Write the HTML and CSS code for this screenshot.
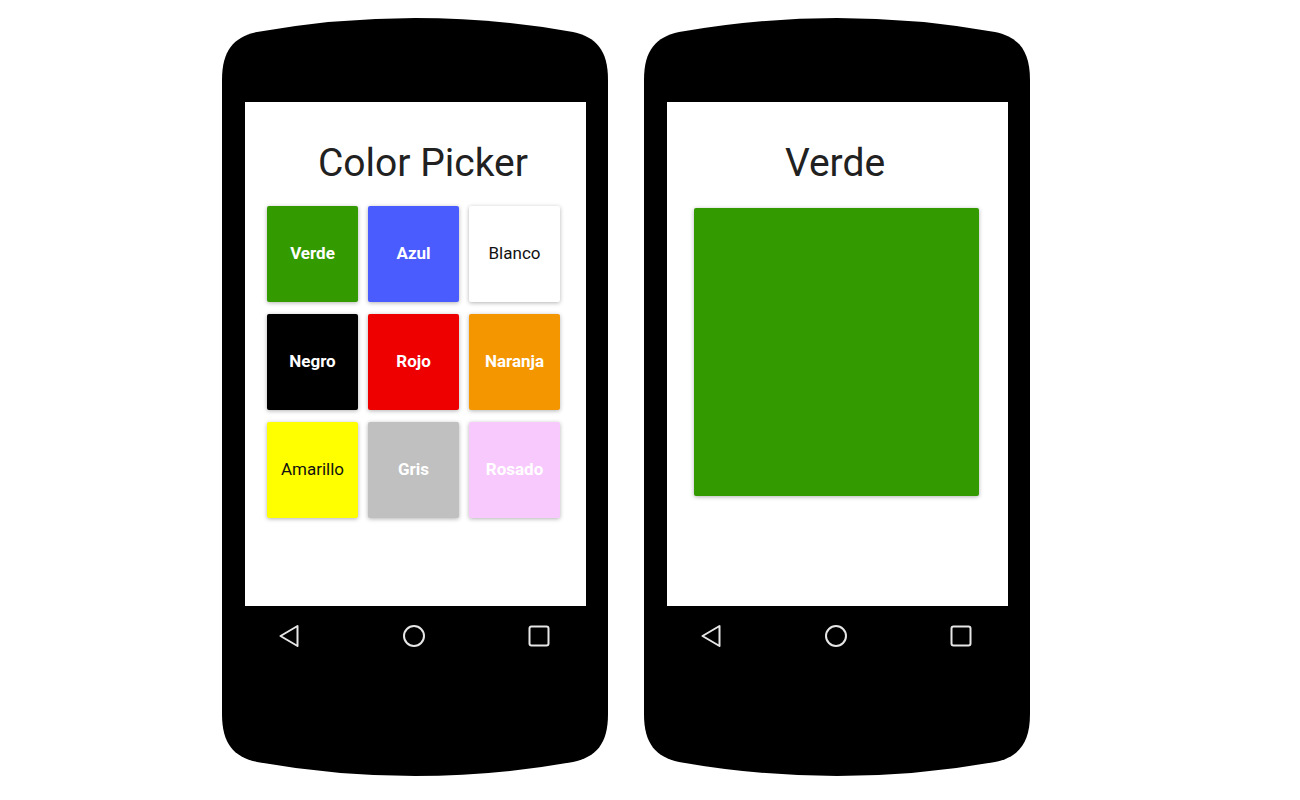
FILE: index.html
```html
<!DOCTYPE html>
<html lang="es">
<head>
<meta charset="utf-8">
<title>Color Picker</title>
<link rel="stylesheet" href="styles.css">
</head>
<body>
<div class="stage">
  <div class="phone">
    <svg class="phone-body" viewBox="0 0 386 758" width="386" height="758" aria-hidden="true">
      <path d="M0,62 C0,32 12,19 35,14 Q193,-14 351,14 C374,19 386,32 386,62 L386,696 C386,726 374,739 351,744 Q193,772 35,744 C12,739 0,726 0,696 Z" fill="#000"/>
    </svg>
    <div class="screen">
      <h1 class="title title-picker">Color Picker</h1>
      <div class="grid">
        <div class="tile tile-verde">Verde</div>
        <div class="tile tile-azul">Azul</div>
        <div class="tile tile-blanco light">Blanco</div>
        <div class="tile tile-negro">Negro</div>
        <div class="tile tile-rojo">Rojo</div>
        <div class="tile tile-naranja">Naranja</div>
        <div class="tile tile-amarillo light">Amarillo</div>
        <div class="tile tile-gris">Gris</div>
        <div class="tile tile-rosado">Rosado</div>
      </div>
    </div>
    <div class="navbar">
      <div class="nav-btn"><svg viewBox="0 0 24 24" width="24" height="24"><path d="M20.5 2 L3.5 12 L20.5 22 Z"/></svg></div>
      <div class="nav-btn"><svg viewBox="0 0 24 24" width="24" height="24"><circle cx="12" cy="12" r="10"/></svg></div>
      <div class="nav-btn"><svg viewBox="0 0 24 24" width="24" height="24"><rect x="2.5" y="2.5" width="19" height="19" rx="2"/></svg></div>
    </div>
  </div>

  <div class="phone">
    <svg class="phone-body" viewBox="0 0 386 758" width="386" height="758" aria-hidden="true">
      <path d="M0,62 C0,32 12,19 35,14 Q193,-14 351,14 C374,19 386,32 386,62 L386,696 C386,726 374,739 351,744 Q193,772 35,744 C12,739 0,726 0,696 Z" fill="#000"/>
    </svg>
    <div class="screen">
      <h1 class="title title-detail">Verde</h1>
      <div class="swatch"></div>
    </div>
    <div class="navbar">
      <div class="nav-btn"><svg viewBox="0 0 24 24" width="24" height="24"><path d="M20.5 2 L3.5 12 L20.5 22 Z"/></svg></div>
      <div class="nav-btn"><svg viewBox="0 0 24 24" width="24" height="24"><circle cx="12" cy="12" r="10"/></svg></div>
      <div class="nav-btn"><svg viewBox="0 0 24 24" width="24" height="24"><rect x="2.5" y="2.5" width="19" height="19" rx="2"/></svg></div>
    </div>
  </div>
</div>
</body>
</html>
```
FILE: styles.css
```css
* { box-sizing: border-box; }

html, body {
  margin: 0;
  padding: 0;
  background: #fff;
  font-family: Roboto, "Noto Sans", Arial, sans-serif;
}

.stage {
  display: flex;
  gap: 36px;
  padding: 18px 0 0 222px;
}

.phone {
  position: relative;
  width: 386px;
  height: 758px;
  padding: 84px 0 0 23px;
  flex: none;
}

.phone-body {
  position: absolute;
  left: 0;
  top: 0;
  z-index: 0;
}

.screen {
  position: relative;
  z-index: 1;
  width: 341px;
  height: 504px;
  background: #fff;
  display: flex;
  flex-direction: column;
}

.title {
  margin: 0;
  padding-top: 37px;
  font-size: 39px;
  line-height: 49px;
  font-weight: 400;
  color: #212121;
  text-align: center;
}

.title-picker {
  padding-left: 15px;
}

.title-detail {
  padding-right: 5px;
}

.grid {
  display: grid;
  grid-template-columns: repeat(3, 91px);
  grid-auto-rows: 96px;
  column-gap: 10px;
  row-gap: 12px;
  margin: 18px 0 0 22px;
}

.tile {
  display: flex;
  align-items: center;
  justify-content: center;
  border-radius: 2px;
  box-shadow: 0 1px 4px rgba(0, 0, 0, 0.3);
  color: #fff;
  font-size: 17px;
  font-weight: 700;
  padding-bottom: 2px;
}

.tile.light {
  color: #111;
  font-weight: 400;
}

.tile-verde { background: #339a00; }
.tile-azul { background: #4b5cff; }
.tile-blanco { background: #fff; }
.tile-negro { background: #000; }
.tile-rojo { background: #ef0000; }
.tile-naranja { background: #f49600; }
.tile-amarillo { background: #ffff00; }
.tile-gris { background: #c0c0c0; }
.tile-rosado { background: #f8c9fd; }

.swatch {
  width: 285px;
  height: 288px;
  margin: 20px 0 0 27px;
  background: #339a00;
  border-radius: 2px;
  box-shadow: 0 1px 4px rgba(0, 0, 0, 0.3);
}

.navbar {
  position: relative;
  z-index: 1;
  display: grid;
  grid-template-columns: repeat(3, 125px);
  height: 60px;
  margin-left: -18.5px;
}

.nav-btn {
  display: flex;
  align-items: center;
  justify-content: center;
}

.nav-btn svg {
  fill: none;
  stroke: #e6e6e6;
  stroke-width: 2;
  stroke-linejoin: round;
}
```
